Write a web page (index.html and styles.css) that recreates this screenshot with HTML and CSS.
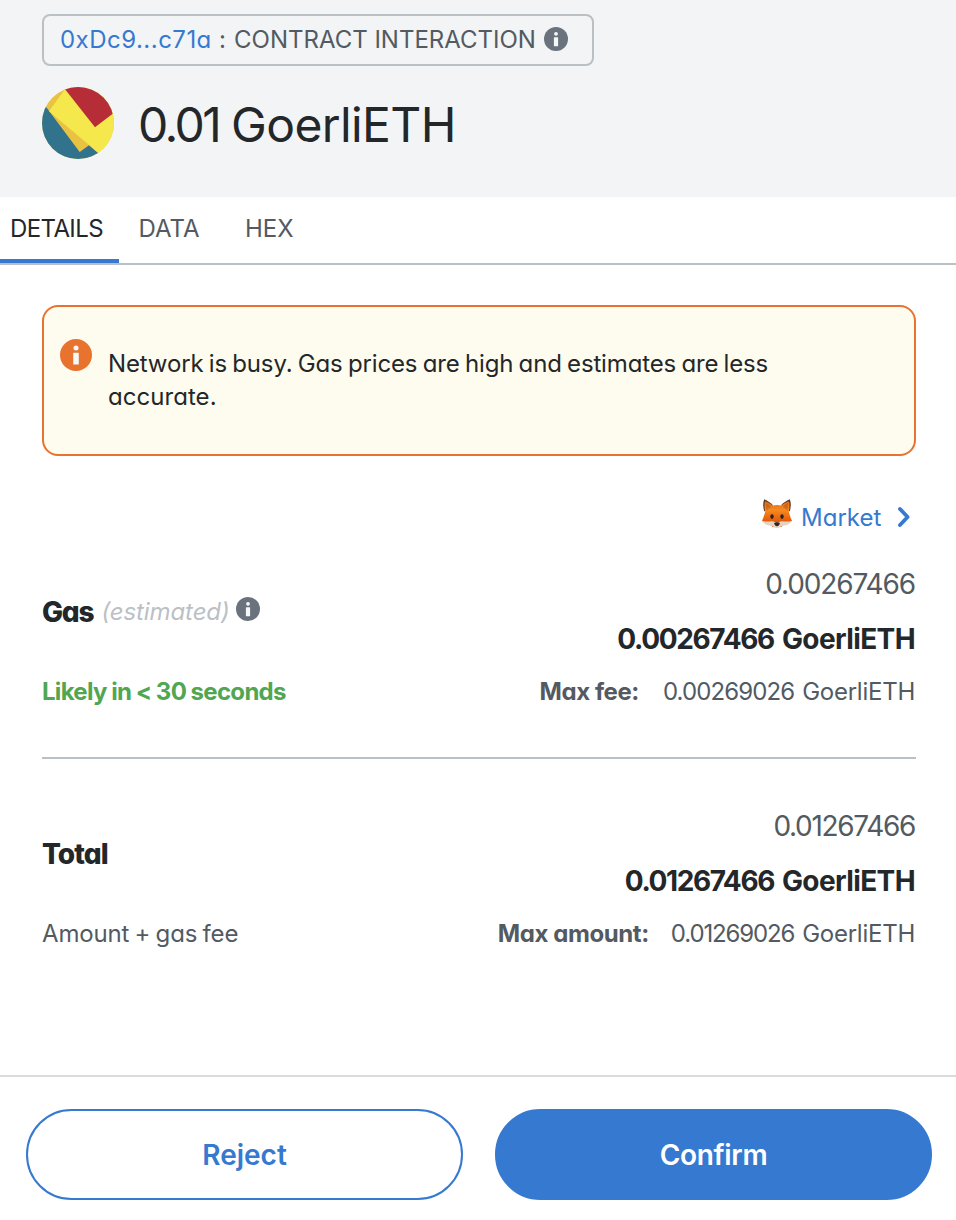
FILE: index.html
```html
<!DOCTYPE html>
<html lang="en">
<head>
<meta charset="utf-8">
<title>Confirm transaction</title>
<link rel="stylesheet" href="styles.css">
</head>
<body>
<svg class="defs" width="0" height="0" aria-hidden="true">
  <symbol id="info" viewBox="0 0 24 24">
    <circle cx="12" cy="12" r="12" fill="currentColor"/>
    <circle class="info-mark" cx="12" cy="6.8" r="1.9"/>
    <rect class="info-mark" x="9.9" y="10.3" width="4.2" height="8.9" rx=".4"/>
  </symbol>
</svg>
<div class="page">
  <header class="summary">
    <div class="action">
      <span class="address">0xDc9...c71a</span><span class="colon">:</span><span>CONTRACT INTERACTION</span>
      <svg class="info info-header"><use href="#info"/></svg>
    </div>
    <div class="amount">
      <svg class="identicon" viewBox="0 0 72 72">
        <clipPath id="round"><circle cx="36" cy="36" r="36"/></clipPath>
        <g clip-path="url(#round)">
          <rect width="72" height="72" fill="#eac241"/>
          <path fill="#31738c" d="M0 14.7 4.3 20.3 37.7 65 47 58.3 72 80H0z"/>
          <path fill="#f4e84c" d="M23 2.3 7 24.2 55.7 65.3 72 79V0z"/>
          <path fill="#b72d37" d="M20.8 -.6 53 40.3 74 24.2V-2z"/>
        </g>
      </svg>
      <h1 class="title"><span class="title-value">0.01</span><span class="title-unit">GoerliETH</span></h1>
    </div>
  </header>

  <nav class="tabs">
    <span class="tab tab-active">DETAILS</span>
    <span class="tab">DATA</span>
    <span class="tab">HEX</span>
  </nav>

  <main class="content">
    <div class="alert">
      <svg class="info info-alert"><use href="#info"/></svg>
      <p class="alert-text">Network is busy. Gas prices are high and estimates are less <span class="alert-end">accurate.</span></p>
    </div>

    <div class="level">
      <svg class="fox" viewBox="0 0 32 32">
        <defs>
          <linearGradient id="fur" x1="0" y1="0" x2="0" y2="1">
            <stop offset="0" stop-color="#e06a14"/>
            <stop offset=".35" stop-color="#f78a1f"/>
            <stop offset=".7" stop-color="#e9620c"/>
            <stop offset="1" stop-color="#c9500f"/>
          </linearGradient>
        </defs>
        <path fill="#5b3a25" d="M3.2 1.2C1.7 5 2 9.5 3.3 13.5L12 7.200C9.5 4.500 6 2.500 3.2 1.200zM28.800 1.200c1.500 3.800 1.200 8.300-.1 12.300L20 7.200c2.500-2.700 6-4.700 8.800-6z"/>
        <path fill="url(#fur)" d="M4 3.200C6.800 4 9.500 5.500 11.700 7.600c2.800-.9 5.800-.9 8.600 0C22.500 5.500 25.200 4 28 3.200c.9 4 .6 7-.3 10.300 1.100 3.200 1.700 6.400 3.300 9.200-3.800 2.500-8.500 3.300-10.500 6.100h-9C9.500 26 4.800 25.200 1 22.700c1.600-2.800 2.200-6 3.300-9.200C3.400 10.200 3.100 7.200 4 3.200z"/>
        <path fill="#a9501a" d="M5.300 5.300c2 .9 3.500 2 4.700 3.600-1.800.9-3.300 2.200-4.300 3.900-.8-2.700-.9-5-.4-7.500zM26.700 5.300c-2 .9-3.500 2-4.700 3.600 1.800.9 3.300 2.200 4.300 3.900.8-2.700.9-5 .4-7.500z" opacity=".45"/>
        <path fill="#e6d3c2" d="M1.200 22.900c3.800 1 6.800.4 9.600.3 2.300 0 3.800 1.300 5.200 1.300s2.900-1.300 5.200-1.300c2.800.1 5.800.7 9.600-.3-2.300 3.800-6.300 4.600-10.300 5-1.600 1.100-2.800 2.300-4.500 2.300s-2.900-1.200-4.500-2.300c-4-.4-8-1.200-10.300-5z"/>
        <ellipse cx="11" cy="18.600" rx="1.700" ry="2.300" fill="#24252a"/>
        <ellipse cx="21" cy="18.600" rx="1.700" ry="2.300" fill="#24252a"/>
        <path fill="#302725" d="M13.200 25c1-.9 4.600-.9 5.600 0 .2 1.700-1.600 3.200-2.800 3.200S13 26.700 13.200 25z"/>
      </svg>
      <span class="level-name">Market</span>
      <svg class="chevron" viewBox="0 0 14 22"><path d="M3 3 10.600 11 3 19"/></svg>
    </div>

    <section class="fee">
      <div class="fee-main">
        <div class="fee-label">
          <span class="label">Gas</span><em class="estimated">(estimated)</em>
          <svg class="info info-gas"><use href="#info"/></svg>
        </div>
        <div class="values">
          <span class="value tight-2">0.00267466</span>
          <strong class="value-bold"><span class="num-bold">0.00267466</span><span class="unit-bold">GoerliETH</span></strong>
        </div>
      </div>
      <div class="fee-sub">
        <span class="likely">Likely in &lt; 30 seconds</span>
        <span class="limit"><b class="limit-label">Max fee:</b><span class="limit-num">0.00269026</span><span class="limit-unit">GoerliETH</span></span>
      </div>
    </section>

    <section class="fee fee-total">
      <div class="fee-main">
        <div class="fee-label"><span class="label total">Total</span></div>
        <div class="values">
          <span class="value tight-1">0.01267466</span>
          <strong class="value-bold"><span class="num-bold num-bold-1">0.01267466</span><span class="unit-bold">GoerliETH</span></strong>
        </div>
      </div>
      <div class="fee-sub">
        <span class="note">Amount + gas fee</span>
        <span class="limit limit-total"><b class="limit-label">Max amount:</b><span class="limit-num limit-num-1">0.01269026</span><span class="limit-unit">GoerliETH</span></span>
      </div>
    </section>
  </main>

  <footer class="actions">
    <button class="button reject">Reject</button>
    <button class="button confirm">Confirm</button>
  </footer>
</div>
</body>
</html>
```
FILE: styles.css
```css
* { box-sizing: border-box; }

body {
  margin: 0;
  background: #fff;
  color: #24272a;
  font: 400 24px/30px Inter, sans-serif;
  font-feature-settings: "cv11";
}

.defs { display: block; }

.page {
  display: flex;
  flex-direction: column;
  width: 956px;
  height: 1220px;
  overflow: hidden;
}

.info { display: block; flex: none; width: 24px; height: 24px; color: #6a737d; }
.info-mark { fill: #f6f7f8; }

/* Header */
.summary { height: 197px; flex: none; padding: 14px 42px 0; background: #f2f4f6; }

.action {
  display: flex;
  align-items: center;
  width: 552px;
  height: 52px;
  padding: 0 0 0 16px;
  border: 2px solid #bbc0c5;
  border-radius: 8px;
  color: #535a61;
  white-space: nowrap;
}

.address { width: 152px; color: #3679d0; letter-spacing: .48px; }
.colon { width: 22px; padding-left: 7px; }
.info-header { margin: -2px 0 0 8px; }

.amount { display: flex; align-items: center; height: 72px; margin-top: 21px; }
.identicon { width: 72px; height: 72px; }

.title {
  display: flex;
  margin: 0 0 0 24px;
  padding-top: 3px;
  font-size: 48px;
  font-weight: 400;
  line-height: 60px;
}
.title-value { width: 92px; letter-spacing: -2.6px; }
.title-unit { letter-spacing: -.6px; margin-left: 1px; }

/* Tabs */
.tabs { display: flex; flex: none; height: 68px; border-bottom: 2px solid #bbc0c5; color: #535a61; }
.tab { height: 66px; padding: 17px 9px 0; margin-right: 27.5px; }
.tab-active {
  width: 119px;
  margin-right: 10.5px;
  padding-left: 10px;
  border-bottom: 4px solid #3679d0;
  color: #24272a;
  letter-spacing: -.6px;
}

/* Body */
.content { flex: 1; padding: 40px 40px 0 42px; }

.alert {
  display: flex;
  height: 151px;
  padding: 32px 16px;
  border: 2px solid #e7732e;
  border-radius: 16px;
  background: #fefcef;
}
.info-alert { width: 32px; height: 32px; color: #e7732e; }
.alert-text {
  width: 700px;
  margin: 8px 0 0 16px;
  line-height: 33px;
  letter-spacing: -.15px;
  word-spacing: -1.25px;
}
.alert-end { letter-spacing: .05px; }

.level { display: flex; align-items: center; justify-content: flex-end; height: 40px; margin-top: 41px; color: #3679d0; }
.fox { width: 32px; height: 32px; margin: 0 8px 6px 0; }
.level-name { width: 80px; padding-top: 2px; }
.chevron { width: 14px; height: 22px; margin: 0 5px 0 16px; }
.chevron path { fill: none; stroke: currentColor; stroke-width: 3.8; stroke-linecap: round; stroke-linejoin: round; }

.fee { height: 195px; margin-top: 27px; border-bottom: 2px solid #bbc0c5; }
.fee-total { margin-top: 47px; border: 0; }

.fee-main { display: flex; justify-content: space-between; height: 113px; }
.fee-label { display: flex; align-items: center; height: 32px; margin-top: 32px; }
.label { font-size: 28px; font-weight: 800; letter-spacing: -1.2px; }
.total { letter-spacing: -.9px; }
.estimated { margin-left: 8px; color: #bbc0c5; letter-spacing: -.1px; }
.info-gas { margin: -6px 0 0 6px; }

.values { display: flex; flex-direction: column; align-items: flex-end; gap: 15px; font-size: 28px; line-height: 41px; }
.value { margin-right: 1px; color: #535a61; }
.tight-2 { letter-spacing: -1.13px; }
.tight-1 { letter-spacing: -1.33px; }
.value-bold { display: flex; gap: 8px; margin: -1px 1px 0 0; font-weight: 700; }
.num-bold { letter-spacing: -1.35px; }
.num-bold-1 { letter-spacing: -1.43px; }
.unit-bold { letter-spacing: -.6px; }

.fee-sub { display: flex; justify-content: space-between; color: #535a61; }
.likely { color: #50a651; font-weight: 700; letter-spacing: -.7px; word-spacing: -.5px; }
.note { letter-spacing: -.15px; word-spacing: -1.3px; }
.limit { display: flex; margin-right: 1px; }
.limit-label { margin-right: 24px; font-weight: 700; letter-spacing: -.4px; }
.limit-total .limit-label { margin-right: 22px; }
.limit-num { margin-right: 8px; letter-spacing: -.9px; }
.limit-num-1 { letter-spacing: -1.15px; }
.limit-unit { letter-spacing: -.25px; }

/* Footer */
.actions {
  display: flex;
  flex: none;
  gap: 32px;
  height: 145px;
  padding: 32px 24px 0 26px;
  border-top: 2px solid #d9dcdf;
}
.button {
  flex: 1;
  height: 91px;
  padding: 0;
  border: 2px solid #3679d0;
  border-radius: 46px;
  font: 600 28px/36px Inter, sans-serif;
}
.reject { background: #fff; color: #3679d0; }
.confirm { background: #3679d0; color: #fff; letter-spacing: -.3px; }
```
